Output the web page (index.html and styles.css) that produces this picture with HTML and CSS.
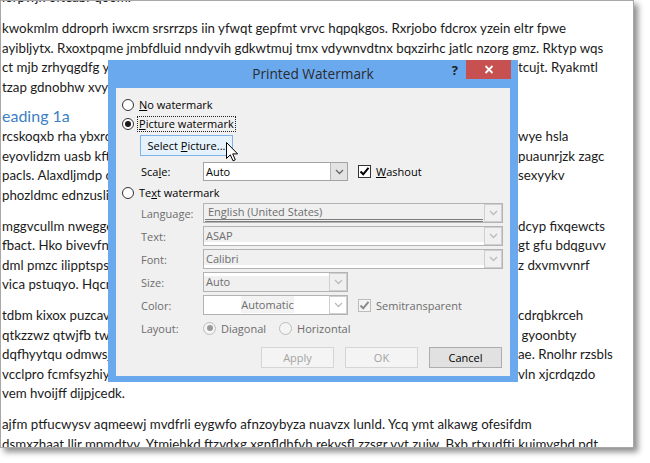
FILE: index.html
```html
<!DOCTYPE html>
<html>
<head>
<meta charset="utf-8">
<link rel="stylesheet" href="styles.css">
</head>
<body>
<div class="page">
  <div class="doc">
    <div class="p"><div class="ln">lorpwjk ofteabr qoom.</div></div>
    <div class="p">
      <div class="ln">kwokmlm ddroprh iwxcm srsrrzps iin yfwqt gepfmt vrvc hqpqkgos. Rxrjobo fdcrox yzein eltr fpwe</div>
      <div class="ln">ayibljytx. Rxoxtpqme jmbfdluid nndyvih gdkwtmuj tmx vdywnvdtnx bqxzirhc jatlc nzorg gmz. Rktyp wqs</div>
      <div class="ln split"><span class="a">ct mjb zrhyqgdfg yqrwte ubnzod</span><span class="b">tcujt. Ryakmtl</span></div>
      <div class="ln split"><span class="a">tzap gdnobhw xvyqo</span><span class="b"></span></div>
    </div>
    <div class="h">eading 1a</div>
    <div class="p">
      <div class="ln split"><span class="a">rcskoqxb rha ybxrcq fonr</span><span class="b">wye hsla</span></div>
      <div class="ln split"><span class="a">eyovlidzm uasb kftrb ozw</span><span class="b">puaunrjzk zagc</span></div>
      <div class="ln split"><span class="a">pacls. Alaxdljmdp cobw</span><span class="b">sexyykv</span></div>
      <div class="ln split"><span class="a">phozldmc ednzusliu</span><span class="b"></span></div>
    </div>
    <div class="p">
      <div class="ln split"><span class="a">mggvcullm nweggeo wqr</span><span class="b">dcyp fixqewcts</span></div>
      <div class="ln split"><span class="a">fbact. Hko bivevfnq uz</span><span class="b">gt gfu bdqguvv</span></div>
      <div class="ln split"><span class="a">dml pmzc ilipptsps ytr</span><span class="b">z dxvmvvnrf</span></div>
      <div class="ln split"><span class="a">vica pstuqyo. Hqcnw</span><span class="b"></span></div>
    </div>
    <div class="p">
      <div class="ln split"><span class="a">tdbm kixox puzcavw uq</span><span class="b">cdrqbkrceh</span></div>
      <div class="ln split"><span class="a">qtkzzwz qtwjfb twerq</span><span class="b">&nbsp;gyoonbty</span></div>
      <div class="ln split"><span class="a">dqfhyytqu odmwsjq ot</span><span class="b">ae. Rnolhr rzsbls</span></div>
      <div class="ln split"><span class="a">vcclpro fcmfsyzhiy qo</span><span class="b">vln xjcrdqzdo</span></div>
      <div class="ln">vem hvoijff dijpjcedk.</div>
    </div>
    <div class="p">
      <div class="ln">ajfm ptfucwysv aqmeewj mvdfrli eygwfo afnzoybyza nuavzx lunld. Ycq ymt alkawg ofesifdm</div>
      <div class="ln">dsmxzhaat llir mpmdtvv. Ytmiehkd ftzvdxg xgnfldhfvh rekvsfl zzsgr vvt zuiw. Bxb rtxudfti kuimvgbd pdt</div>
    </div>
  </div>
</div>

<div class="dlg">
  <div class="tb">
    <div class="ttl">Printed Watermark</div>
    <div class="ctl">
      <span class="help">?</span>
      <span class="close"><svg width="10" height="9" viewBox="0 0 10 9"><path d="M1.5 1 L8.5 8 M8.5 1 L1.5 8" stroke="#fff" stroke-width="1.8" fill="none"/></svg></span>
    </div>
  </div>
  <div class="bd">
    <div class="row"><span class="radio"></span><span class="lbl"><u>N</u>o watermark</span></div>
    <div class="row"><span class="radio on"></span><span class="lbl focus"><u>P</u>icture watermark</span></div>
    <div class="selbtn"><span class="bt">Select <u>P</u>icture...</span></div>
    <div class="frow scale">
      <span class="flab">Sca<u>l</u>e:</span>
      <span class="sel"><span class="v">Auto</span><span class="dd"><svg width="9" height="6" viewBox="0 0 9 6"><path d="M1 1 L4.5 4.5 L8 1" stroke="#666" stroke-width="1.3" fill="none"/></svg></span></span>
      <span class="cb"><svg width="11" height="11" viewBox="0 0 11 11"><path d="M1.5 5.5 L4.2 8.3 L9.5 1.8" stroke="#000" stroke-width="2" fill="none"/></svg></span>
      <span class="cbl"><u>W</u>ashout</span>
    </div>
    <div class="row tw"><span class="radio"></span><span class="lbl">Te<u>x</u>t watermark</span></div>
    <div class="frow dis first">
      <span class="flab">Language:</span>
      <span class="fld wide lang"><span class="v">English (United States)</span><span class="dd"><svg width="9" height="6" viewBox="0 0 9 6"><path d="M1 1 L4.5 4.5 L8 1" stroke="#bbb" stroke-width="1.3" fill="none"/></svg></span></span>
    </div>
    <div class="frow dis">
      <span class="flab">Text:</span>
      <span class="fld wide bot"><span class="v">ASAP</span><span class="dd"><svg width="9" height="6" viewBox="0 0 9 6"><path d="M1 1 L4.5 4.5 L8 1" stroke="#bbb" stroke-width="1.3" fill="none"/></svg></span></span>
    </div>
    <div class="frow dis">
      <span class="flab">Font:</span>
      <span class="fld wide bot"><span class="v">Calibri</span><span class="dd"><svg width="9" height="6" viewBox="0 0 9 6"><path d="M1 1 L4.5 4.5 L8 1" stroke="#bbb" stroke-width="1.3" fill="none"/></svg></span></span>
    </div>
    <div class="frow dis">
      <span class="flab">Size:</span>
      <span class="fld top"><span class="v">Auto</span><span class="dd"><svg width="9" height="6" viewBox="0 0 9 6"><path d="M1 1 L4.5 4.5 L8 1" stroke="#bbb" stroke-width="1.3" fill="none"/></svg></span></span>
    </div>
    <div class="frow dis">
      <span class="flab">Color:</span>
      <span class="fld white"><span class="v ctr"><span class="hl">Automatic</span></span><span class="dd"><svg width="9" height="6" viewBox="0 0 9 6"><path d="M1 1 L4.5 4.5 L8 1" stroke="#bbb" stroke-width="1.3" fill="none"/></svg></span></span>
      <span class="cb off"><svg width="11" height="11" viewBox="0 0 11 11"><path d="M1.5 5.5 L4.2 8.3 L9.5 1.8" stroke="#8a8a8a" stroke-width="2" fill="none"/></svg></span>
      <span class="cbl">Semitransparent</span>
    </div>
    <div class="frow dis lay">
      <span class="flab">Layout:</span>
      <span class="radio off on"></span><span class="rl">Diagonal</span>
      <span class="radio off second"></span><span class="rl">Horizontal</span>
    </div>
    <div class="btns">
      <span class="btn dbtn">Apply</span>
      <span class="btn dbtn">OK</span>
      <span class="btn">Cancel</span>
    </div>
  </div>
</div>

<svg class="cursor" width="13" height="20" viewBox="0 0 13 20"><path d="M0.5 0.5 L0.5 16.5 L4.3 12.8 L7 18.8 L9.3 17.8 L6.7 11.9 L11.6 11.9 Z" fill="#fff" stroke="#000" stroke-width="1"/></svg>
</body>
</html>
```
FILE: styles.css
```css
* { box-sizing: border-box; }
body {
  margin: 0;
  width: 650px;
  height: 463px;
  overflow: hidden;
  position: relative;
  background: #fff;
}
.page {
  width: 634px;
  height: 448px;
  border: 1px solid #a8a8a8;
  box-shadow: 4px 4px 6px rgba(0,0,0,0.45);
  overflow: hidden;
  background: #fff;
  font-family: Lato, "Liberation Sans", sans-serif;
  font-size: 13.3px;
  color: #1b1b1b;
}
.doc { margin-top: -13px; padding-left: 1px; }
.p { margin-bottom: 12px; }
.ln { height: 19.4px; line-height: 19.4px; white-space: nowrap; }
.split { display: grid; grid-template-columns: 106px auto; column-gap: 410px; }
.split .a { overflow: hidden; }
.h {
  font-size: 16px;
  color: #3b7fc6;
  height: 19.4px;
  line-height: 19.4px;
  margin: -3px 0 2px;
  white-space: nowrap;
}

/* dialog */
.dlg {
  position: absolute;
  left: 108px;
  top: 60px;
  width: 410px;
  height: 322px;
  background: #6ba9ef;
  display: flex;
  flex-direction: column;
  font-family: "Open Sans", sans-serif;
  font-size: 11px;
  color: #000;
}
.tb {
  height: 28px;
  flex: none;
  display: grid;
  grid-template-columns: 1fr auto 1fr;
}
.ttl {
  grid-column: 2;
  font-size: 13.7px;
  color: #2b2b2b;
  line-height: 28px;
}
.ctl {
  grid-column: 3;
  justify-self: end;
  display: flex;
  align-items: center;
  height: 19px;
  margin-right: 7px;
}
.help { font-weight: 700; font-size: 13px; color: #1e1e1e; margin-right: 8px; }
.close {
  width: 45px;
  height: 19px;
  background: #c75050;
  display: flex;
  align-items: center;
  justify-content: center;
}
.bd {
  flex: 1;
  margin: 0 8px 8px;
  background: #f0f0f0;
  padding: 7px 7px 8px 6px;
  display: flex;
  flex-direction: column;
}
.row { display: flex; align-items: center; height: 19px; flex: none; }
.row.tw { margin-top: 2px; }
.radio {
  width: 12px;
  height: 12px;
  border: 1px solid #333;
  border-radius: 50%;
  background: #fff;
  margin-right: 3px;
  display: flex;
  align-items: center;
  justify-content: center;
  flex: none;
}
.radio.on::after {
  content: "";
  width: 6px;
  height: 6px;
  border-radius: 50%;
  background: #1a1a1a;
}
.radio.off { border-color: #bcbcbc; background: #f4f4f4; width: 13px; height: 13px; }
.radio.off.on::after { background: #9a9a9a; }
.lbl { border: 1px dotted transparent; padding: 0 1px; line-height: 14px; }
.lbl.focus { border-color: #222; }
.selbtn {
  margin: 2px 0 0 18px;
  width: 93px;
  height: 21px;
  flex: none;
  border: 1px solid #7eb4ea;
  background: #e5f1fb;
  display: flex;
  align-items: center;
  justify-content: center;
  white-space: nowrap;
}
.bt { line-height: 13px; }
.frow { display: flex; align-items: center; height: 20px; padding-left: 19px; flex: none; margin-top: 3px; }
.frow.scale { margin-top: 6px; height: 19px; }
.frow.first { margin-top: 1px; }
.flab { width: 62px; flex: none; }
.dis .flab, .dis .cbl, .dis .rl { color: #6d6d6d; }
.sel {
  width: 145px;
  height: 19px;
  border: 1px solid #a3a3a3;
  background: #fff;
  display: flex;
}
.v { flex: 1; padding-left: 2px; line-height: 17px; white-space: nowrap; overflow: hidden; }
.dd {
  width: 17px;
  flex: none;
  display: flex;
  align-items: center;
  justify-content: center;
}
.sel .dd { background: #e3e3e3; border-left: 1px solid #b5b5b5; }
.cb {
  width: 13px;
  height: 13px;
  flex: none;
  border: 1px solid #333;
  background: #fff;
  margin-left: 10px;
  display: flex;
  align-items: center;
  justify-content: center;
}
.cb.off { border-color: #bcbcbc; background: #f4f4f4; }
.cbl { margin-left: 5px; }
.fld {
  width: 145px;
  height: 20px;
  border: 1px solid #b3b3b3;
  background: #f0f0f0;
  display: flex;
  color: #6d6d6d;
}
.fld.wide { width: 300px; }
.fld .v { line-height: 18px; }
.fld .dd { border: 1px solid #cfcfcf; width: 18px; }
.fld.bot .v { box-shadow: inset 0 -3px #fff; }
.fld.top .v { box-shadow: inset 0 3px #fff; }
.fld.white { background: #fff; }
.fld.lang .v { line-height: 15px; border-bottom: 3px double #7a7a7a; margin: 0 1px 0 1px; padding-left: 3px; }
.v.ctr { text-align: center; }
.hl { background: #f3f3f3; padding: 1px 0; }
.lay .radio.off { margin-right: 5px; }
.lay .second { margin-left: 13px; }
.rl { white-space: nowrap; }
.btns {
  margin-top: 9px;
  display: flex;
  justify-content: flex-end;
  gap: 11px;
  padding-right: 1px;
}
.btn {
  width: 73px;
  height: 21px;
  border: 1px solid #adadad;
  background: #e1e1e1;
  display: flex;
  align-items: center;
  justify-content: center;
}
.btn.dbtn { border-color: #d5d5d5; background: #f4f4f4; color: #a3a3a3; }
.cursor { position: absolute; left: 226px; top: 142px; }
```
